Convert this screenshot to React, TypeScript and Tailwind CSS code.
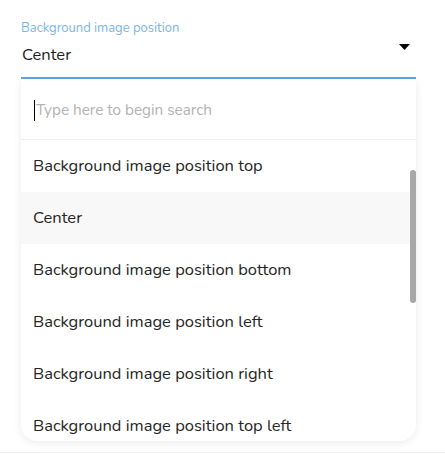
import React from "react";

const items = [
  "Background image position top",
  "Center",
  "Background image position bottom",
  "Background image position left",
  "Background image position right",
  "Background image position top left",
];

export default function App() {
  return (
    <div
      className="relative w-[445px] h-[454px] bg-white overflow-hidden"
      style={{ fontFamily: '"Nunito", "Lato", "Noto Sans", sans-serif' }}
    >
      <div className="pt-[20px] pl-[21px] pr-[29px]">
        <div className="text-[13px] leading-[16px] text-[#7ab6e6]">Background image position</div>
        <div className="flex items-start justify-between h-[43px] border-b-2 border-[#5fa6df]">
          <span className="text-[16.5px] leading-[22px] mt-[8px] text-[#1d1d1d] pl-[1px]">Center</span>
          <svg width="11" height="6" viewBox="0 0 11 6" className="mr-[6px] mt-[8px]">
            <path d="M0 0 H11 L5.5 6 Z" fill="#000" />
          </svg>
        </div>
        <div className="relative h-[362px] bg-white rounded-b-[16px] shadow-[0_2px_8px_rgba(0,0,0,0.08)] overflow-hidden">
          <div className="h-[61px] flex items-center pl-[13px] pt-[3px] border-b border-[#f0f0f0]">
            <span className="w-[1px] h-[21px] bg-black" />
            <span className="text-[15.3px] text-[#b3b3b3] pl-[1px]">Type here to begin search</span>
          </div>
          <div className="flex flex-col">
            {items.map((t, i) => (
              <div
                key={t}
                className={`h-[52px] shrink-0 flex items-center pl-[12px] pt-[1px] text-[16.5px] text-[#262626] ${
                  i === 1 ? "bg-[#f8f8f8]" : ""
                }`}
              >
                {t}
              </div>
            ))}
          </div>
          <div className="absolute right-[0px] top-[91px] w-[6px] h-[133px] rounded-full bg-[#a8a8a8]" />
        </div>
      </div>
      <div className="absolute left-0 right-0 bottom-[1px] h-[1px] bg-[#f2f2f2]" />
    </div>
  );
}
